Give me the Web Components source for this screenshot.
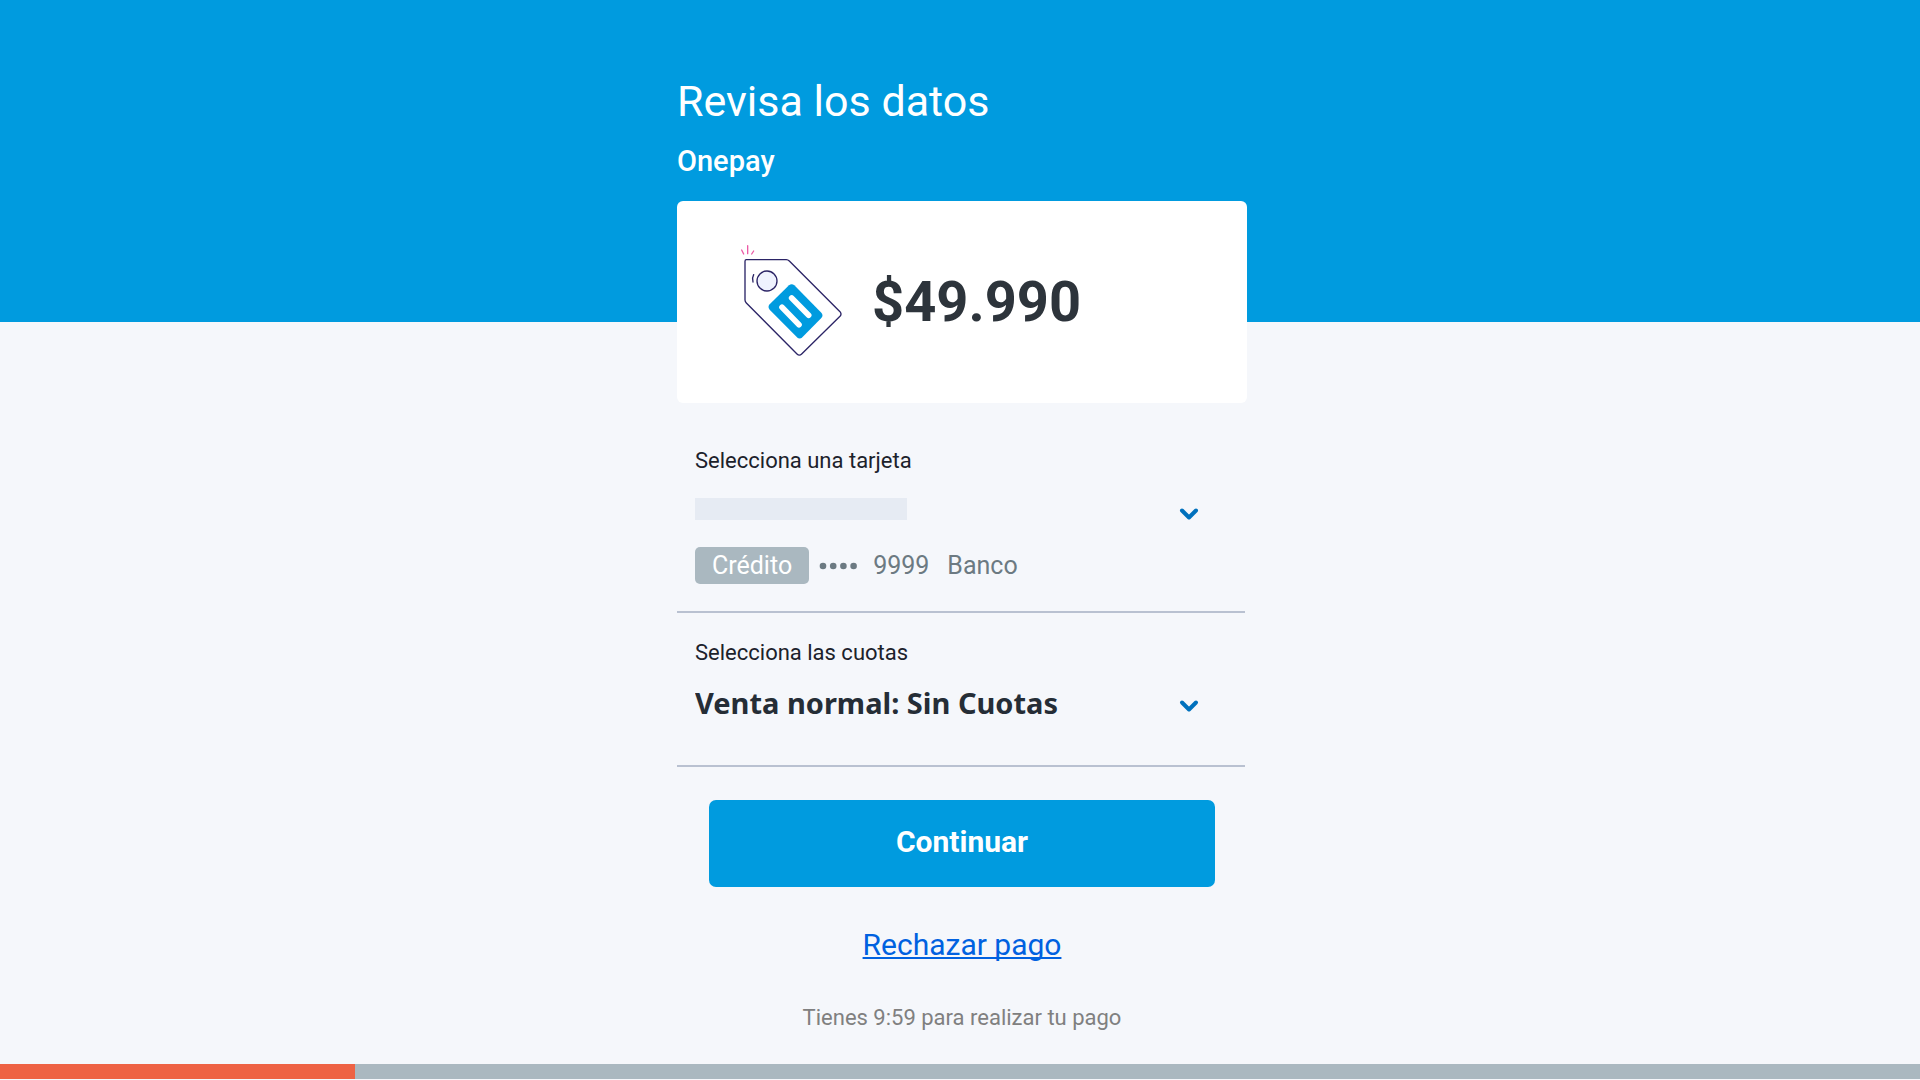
<!DOCTYPE html>
<html lang="es">
<head>
<meta charset="utf-8">
<meta name="viewport" content="width=device-width, initial-scale=1">
<title>Onepay</title>
<style>
body { margin: 0; font-family: Roboto, "Liberation Sans", sans-serif; color: #2b3138; }
</style>
</head>
<body>
<pay-page>
  <pay-heading slot="header">
    Revisa los datos
    <span slot="brand">Onepay</span>
  </pay-heading>
  <pay-amount>$49.990</pay-amount>
  <pay-select label="Selecciona una tarjeta" masked>
    <pay-card-info slot="detail" kind="Crédito" digits="9999" bank="Banco"></pay-card-info>
  </pay-select>
  <pay-select label="Selecciona las cuotas" value="Venta normal: Sin Cuotas"></pay-select>
  <pay-actions></pay-actions>
  <pay-timer slot="footer" progress="18.5"></pay-timer>
</pay-page>

<script>
function define(name, render) {
  customElements.define(name, class extends HTMLElement {
    connectedCallback() {
      if (this.shadowRoot) return;
      const t = document.createElement('template');
      t.innerHTML = '<style>*{box-sizing:border-box}:host{display:block}</style>' + render(this);
      this.attachShadow({ mode: 'open' }).append(t.content.cloneNode(true));
    }
  });
}

define('pay-page', () => `
<style>
  :host { display: flex; flex-direction: column; min-height: 100vh;
    background: linear-gradient(#009bdf 322px, #f5f7fb 322px); }
  main { flex: 1; width: 100%; max-width: 574px; margin: 0 auto; padding: 75px 0 32px 4px; }
</style>
<main><slot name="header"></slot><slot></slot></main>
<slot name="footer"></slot>`);

define('pay-heading', () => `
<style>
  :host { color: #fff; margin-bottom: 24px; }
  h1 { margin: 0 0 18px; font-size: 43px; line-height: 52px; font-weight: 400; }
  h2 { margin: 0; font-size: 29px; line-height: 32px; font-weight: 500; }
</style>
<h1><slot></slot></h1>
<h2><slot name="brand"></slot></h2>`);

define('pay-amount', () => `
<style>
  :host { display: flex; align-items: center; gap: 28px; height: 202px; padding-left: 63px;
    background: #fff; border-radius: 6px; font-size: 56px; line-height: 66px; font-weight: 700; color: #2d343b; }
  svg { flex: none; }
</style>
<svg width="104" height="118" viewBox="61 40 312 354" fill="none" stroke-linecap="round" stroke-linejoin="round" aria-hidden="true">
  <path d="M84 48V72M66 61L72 73M102 64L96 73" stroke="#ec5aa6" stroke-width="4"/>
  <path d="M80 90H200Q205 90 209 94L361 246Q367 253 361 260L246 373Q239 380 232 373L80 220Q76 216 76 211V95Q76 90 80 90Z" stroke="#2b2466" stroke-width="4"/>
  <circle cx="142" cy="154" r="30" fill="#eff2fe" stroke="#2b2466" stroke-width="4"/>
  <path d="M102 135Q96 146 100 157" stroke="#2b2466" stroke-width="4"/>
  <path d="M208 167Q216 160 224 167L305 249Q312 257 305 265L248 323Q240 330 232 323L150 240Q143 232 150 224Z" fill="#009bdf"/>
  <path d="M187 233L238 285M216 205L267 257" stroke="#fff" stroke-width="17"/>
</svg>
<span><slot></slot></span>`);

define('pay-select', el => `
<style>
  :host { padding: 27px 19px 31px 18px; border-bottom: 2px solid #b9c1d1; margin-right: 2px; }
  :host([masked]) { padding: 45px 19px 27px 18px; }
  label { display: block; font-size: 22px; line-height: 26px; color: #1c222b; }
  .control { display: grid; align-items: center; height: 56px; margin-top: 12px; }
  select, svg { grid-area: 1 / 1; }
  select { appearance: none; width: 100%; height: 56px; padding: 0 48px 6px 0; margin: 0; border: 0;
    background: none; color: #252d36; font: 700 29px/38px "Noto Sans", "Open Sans", sans-serif; }
  :host([masked]) select { background: linear-gradient(#e6ebf3, #e6ebf3) 0 12px / 212px 22px no-repeat; }
  svg { justify-self: end; margin-right: 27px; pointer-events: none; }
  ::slotted(*) { margin-top: 5px; }
</style>
<label for="choice">${el.getAttribute('label')}</label>
<div class="control">
  <select id="choice"><option>${el.getAttribute('value') || ''}</option></select>
  <svg width="20" height="14" viewBox="0 0 20 14" fill="none" aria-hidden="true">
    <path d="M3 3.5L10 10.5L17 3.5" stroke="#0071bd" stroke-width="4" stroke-linecap="round" stroke-linejoin="round"/>
  </svg>
</div>
<slot name="detail"></slot>`);

define('pay-card-info', el => `
<style>
  :host { display: flex; align-items: center; font-size: 25px; line-height: 37px; color: #6c7a82; }
  .kind { padding: 0 17px; border-radius: 5px; background: #aab8c0; color: #fff; }
  svg { margin: 0 16px 0 10px; }
  .bank { margin-left: 18px; }
</style>
<span class="kind">${el.getAttribute('kind')}</span>
<svg width="38" height="8" viewBox="0 0 38 8" fill="currentColor" aria-hidden="true">
  <circle cx="4" cy="4" r="3.3"/><circle cx="14.2" cy="4" r="3.3"/><circle cx="24.4" cy="4" r="3.3"/><circle cx="34.6" cy="4" r="3.3"/>
</svg>
<span>${el.getAttribute('digits')}</span>
<span class="bank">${el.getAttribute('bank')}</span>`);

define('pay-actions', () => `
<style>
  :host { display: flex; flex-direction: column; align-items: center; padding: 33px 32px 0; }
  button { width: 100%; height: 87px; border: 0; border-radius: 7px; background: #009bdf; color: #fff;
    font: inherit; font-size: 30px; line-height: 36px; font-weight: 700; padding: 0 0 4px; cursor: pointer; }
  a { margin-top: 40px; font-size: 30px; line-height: 36px; color: #0061e0;
    text-decoration: underline; text-decoration-skip-ink: none; text-decoration-thickness: 2px; text-underline-offset: 2px; }
  p { margin: 42px 0 0; font-size: 22px; line-height: 26px; color: #808080; }
</style>
<button type="button">Continuar</button>
<a href="#rechazar">Rechazar pago</a>
<p>Tienes 9:59 para realizar tu pago</p>`);

define('pay-timer', el => `
<style>
  :host { height: 15px; background: #aab8c0; margin-bottom: 1px; }
  div { height: 100%; width: ${el.getAttribute('progress')}%; background: #ee6244; }
</style>
<div></div>`);
</script>
</body>
</html>
